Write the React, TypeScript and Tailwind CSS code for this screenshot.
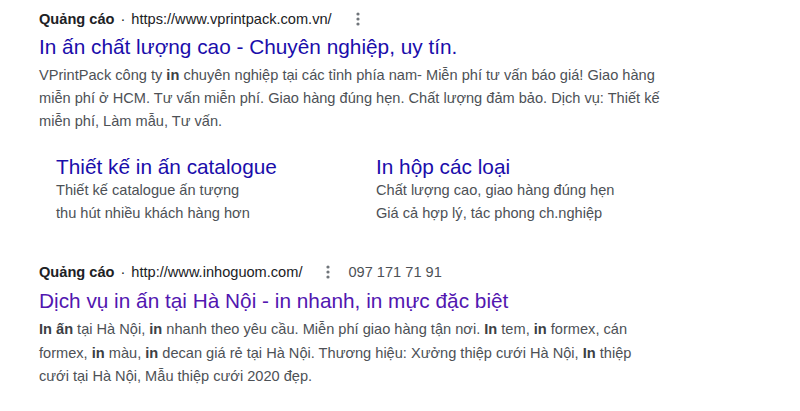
const MoreDots = () => (
  <svg width="4" height="14" viewBox="0 0 4 14" className="fill-[#70757a]">
    <circle cx="2" cy="2" r="1.6" />
    <circle cx="2" cy="7" r="1.6" />
    <circle cx="2" cy="12" r="1.6" />
  </svg>
);

const AdHeader = ({ url, phone }: { url: string; phone?: string }) => (
  <div className="flex items-center h-[22px] text-[14.6px] leading-[22px] text-[#202124]">
    <span className="font-bold">Quảng cáo</span>
    <span className="px-[6px]">·</span>
    <span>{url}</span>
    <span className="ml-[24px] flex items-center">
      <MoreDots />
    </span>
    {phone && <span className="ml-[18px] text-[#4d5156]">{phone}</span>}
  </div>
);

const Sitelink = ({ title, lines }: { title: string; lines: string[] }) => (
  <div className="w-[320px]">
    <div className="text-[20.8px] leading-[24px] text-[#1a0dab]">{title}</div>
    {lines.map((l) => (
      <div key={l} className="text-[14.6px] leading-[23px] text-[#4d5156]">
        {l}
      </div>
    ))}
  </div>
);

export default function App() {
  return (
    <div className="w-[800px] h-[411px] bg-white pl-[39px] pt-[8px] font-['Liberation_Sans',Arial,sans-serif] overflow-hidden">
      {/* Ad 1 */}
      <AdHeader url="https://www.vprintpack.com.vn/" />
      <div className="mt-[4px] text-[20.8px] leading-[26px] text-[#1a0dab]">
        In ấn chất lượng cao - Chuyên nghiệp, uy tín.
      </div>
      <div className="mt-[4px] w-[680px] text-[14.6px] leading-[23px] text-[#4d5156]">
        VPrintPack công ty <b className="text-[#3c4043]">in</b> chuyên nghiệp tại các tỉnh phía nam- Miễn phí tư vấn báo giá! Giao hàng
        <br />
        miễn phí ở HCM. Tư vấn miễn phí. Giao hàng đúng hẹn. Chất lượng đảm bảo. Dịch vụ: Thiết kế
        <br />
        miễn phí, Làm mẫu, Tư vấn.
      </div>

      {/* Sitelinks */}
      <div className="mt-[22px] ml-[17px] flex">
        <Sitelink
          title="Thiết kế in ấn catalogue"
          lines={["Thiết kế catalogue ấn tượng", "thu hút nhiều khách hàng hơn"]}
        />
        <Sitelink
          title="In hộp các loại"
          lines={["Chất lượng cao, giao hàng đúng hẹn", "Giá cả hợp lý, tác phong ch.nghiệp"]}
        />
      </div>

      {/* Ad 2 */}
      <div className="mt-[36px]">
        <AdHeader url="http://www.inhoguom.com/" phone="097 171 71 91" />
      </div>
      <div className="mt-[5px] text-[20.8px] leading-[26px] text-[#5216b0]">
        Dịch vụ in ấn tại Hà Nội - in nhanh, in mực đặc biệt
      </div>
      <div className="mt-[4px] w-[680px] text-[14.6px] leading-[23.5px] text-[#4d5156]">
        <b className="text-[#3c4043]">In ấn</b> tại Hà Nội, <b className="text-[#3c4043]">in</b> nhanh theo yêu cầu. Miễn phí giao hàng tận nơi.{" "}
        <b className="text-[#3c4043]">In</b> tem, <b className="text-[#3c4043]">in</b> formex, cán
        <br />
        formex, <b className="text-[#3c4043]">in</b> màu, <b className="text-[#3c4043]">in</b> decan giá rẻ tại Hà Nội. Thương hiệu: Xưởng thiệp cưới Hà Nội,{" "}
        <b className="text-[#3c4043]">In</b> thiệp
        <br />
        cưới tại Hà Nội, Mẫu thiệp cưới 2020 đẹp.
      </div>
    </div>
  );
}
